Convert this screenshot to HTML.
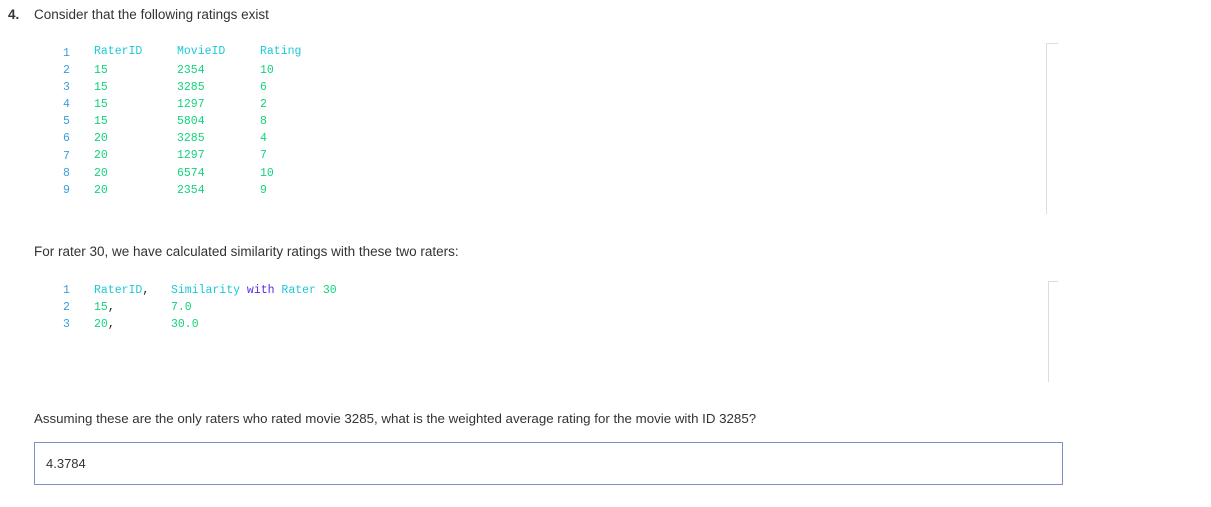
<!DOCTYPE html>
<html><head><style>
body{margin:0;width:1211px;height:507px;background:#fff;font-family:"Liberation Sans",sans-serif;color:#333;position:relative;overflow:hidden}
.a{position:absolute;white-space:pre}
.t{font-size:13.5px;color:#333}
.m{font-family:"Liberation Mono",monospace;font-size:11.5px}
.n{color:#3a9fdc}.h{color:#1cc9d6}.g{color:#12d47c}.k{color:#222}.w{color:#5a2de0}
.v{position:absolute;width:1px;background:#ddd}
.s{position:absolute;height:1px;background:#ddd}
</style></head><body>
<div class="a t" style="left:8px;top:7px;font-weight:bold">4.</div>
<div class="a t" style="left:34px;top:7px">Consider that the following ratings exist</div>
<div class="a m" style="left:63px;top:45px;line-height:17.1px"><span class="n">1
2
3
4
5
6
7
8
9</span></div>
<div class="a m h" style="left:94px;top:45px">RaterID</div>
<div class="a m h" style="left:177px;top:45px">MovieID</div>
<div class="a m h" style="left:260px;top:45px">Rating</div>
<div class="a m g" style="left:94px;top:62px;line-height:17.1px">15
15
15
15
20
20
20
20</div>
<div class="a m g" style="left:177px;top:62px;line-height:17.1px">2354
3285
1297
5804
3285
1297
6574
2354</div>
<div class="a m g" style="left:260px;top:62px;line-height:17.1px">10
6
2
8
4
7
10
9</div>
<div class="v" style="left:1046px;top:43px;height:171px"></div>
<div class="s" style="left:1046px;top:43px;width:12px"></div>
<div class="a t" style="left:34px;top:244px">For rater 30, we have calculated similarity ratings with these two raters:</div>
<div class="a m n" style="left:63px;top:282px;line-height:17px">1
2
3</div>
<div class="a m" style="left:94px;top:282px;line-height:17px"><span class="h">RaterID</span><span class="k">,</span>
<span class="g">15</span><span class="k">,</span>
<span class="g">20</span><span class="k">,</span></div>
<div class="a m" style="left:171px;top:282px;line-height:17px"><span class="h">Similarity </span><span class="w">with</span><span class="h"> Rater </span><span class="g">30</span>
<span class="g">7.0</span>
<span class="g">30.0</span></div>
<div class="v" style="left:1048px;top:281px;height:101px"></div>
<div class="s" style="left:1048px;top:281px;width:10px"></div>
<div class="a t" style="left:34px;top:411px;font-size:13.3px">Assuming these are the only raters who rated movie 3285, what is the weighted average rating for the movie with ID 3285?</div>
<div style="position:absolute;left:34px;top:442px;width:1027px;height:41px;border:1px solid #7f90c8"></div>
<div class="a t" style="left:46px;top:456px;font-size:13px">4.3784</div>
</body></html>
